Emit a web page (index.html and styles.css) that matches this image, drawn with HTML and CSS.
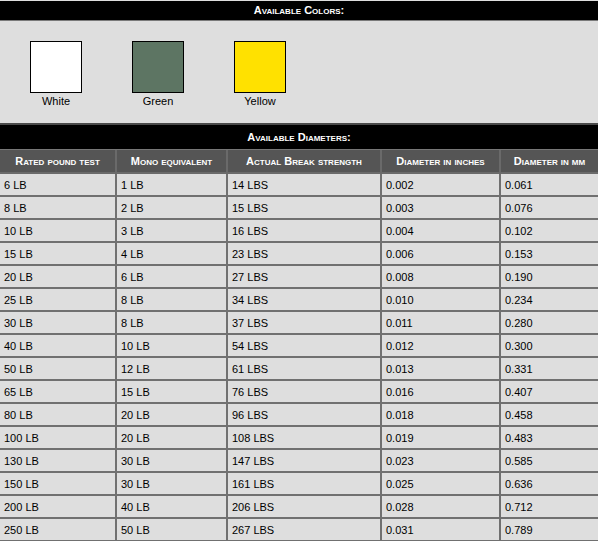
FILE: index.html
```html
<!DOCTYPE html>
<html>
<head>
<meta charset="utf-8">
<link rel="stylesheet" href="styles.css">
</head>
<body>
<div class="page">
  <div class="bar bar-top">Available Colors:</div>
  <div class="colors">
    <div class="swatch"><div class="box white"></div><div class="label">White</div></div>
    <div class="swatch"><div class="box green"></div><div class="label">Green</div></div>
    <div class="swatch"><div class="box yellow"></div><div class="label">Yellow</div></div>
  </div>
  <div class="bar bar-diam">Available Diameters:</div>
  <table class="diam">
    <colgroup>
      <col class="c1"><col class="c2"><col class="c3"><col class="c4"><col class="c5">
    </colgroup>
    <thead>
      <tr><th>Rated pound test</th><th>Mono equivalent</th><th>Actual Break strength</th><th>Diameter in inches</th><th>Diameter in mm</th></tr>
    </thead>
    <tbody>
      <tr><td>6 LB</td><td>1 LB</td><td>14 LBS</td><td>0.002</td><td>0.061</td></tr>
      <tr><td>8 LB</td><td>2 LB</td><td>15 LBS</td><td>0.003</td><td>0.076</td></tr>
      <tr><td>10 LB</td><td>3 LB</td><td>16 LBS</td><td>0.004</td><td>0.102</td></tr>
      <tr><td>15 LB</td><td>4 LB</td><td>23 LBS</td><td>0.006</td><td>0.153</td></tr>
      <tr><td>20 LB</td><td>6 LB</td><td>27 LBS</td><td>0.008</td><td>0.190</td></tr>
      <tr><td>25 LB</td><td>8 LB</td><td>34 LBS</td><td>0.010</td><td>0.234</td></tr>
      <tr><td>30 LB</td><td>8 LB</td><td>37 LBS</td><td>0.011</td><td>0.280</td></tr>
      <tr><td>40 LB</td><td>10 LB</td><td>54 LBS</td><td>0.012</td><td>0.300</td></tr>
      <tr><td>50 LB</td><td>12 LB</td><td>61 LBS</td><td>0.013</td><td>0.331</td></tr>
      <tr><td>65 LB</td><td>15 LB</td><td>76 LBS</td><td>0.016</td><td>0.407</td></tr>
      <tr><td>80 LB</td><td>20 LB</td><td>96 LBS</td><td>0.018</td><td>0.458</td></tr>
      <tr><td>100 LB</td><td>20 LB</td><td>108 LBS</td><td>0.019</td><td>0.483</td></tr>
      <tr><td>130 LB</td><td>30 LB</td><td>147 LBS</td><td>0.023</td><td>0.585</td></tr>
      <tr><td>150 LB</td><td>30 LB</td><td>161 LBS</td><td>0.025</td><td>0.636</td></tr>
      <tr><td>200 LB</td><td>40 LB</td><td>206 LBS</td><td>0.028</td><td>0.712</td></tr>
      <tr><td>250 LB</td><td>50 LB</td><td>267 LBS</td><td>0.031</td><td>0.789</td></tr>
    </tbody>
  </table>
</div>
</body>
</html>
```
FILE: styles.css
```css
html, body {
  margin: 0;
  padding: 0;
  background: #dedede;
}
.page {
  width: 598px;
  font-family: "Liberation Sans", Arial, sans-serif;
  padding-top: 1px;
}
.bar {
  background: #000;
  color: #fff;
  font-weight: bold;
  font-variant: small-caps;
  font-size: 11px;
  text-align: center;
}
.bar-top {
  height: 19px;
  line-height: 19px;
  border-bottom: 1px solid #7a7a7a;
}
.colors {
  display: flex;
  gap: 50px;
  padding: 20px 0 0 30px;
  height: 82px;
  border-bottom: 2px solid #4a4a4a;
}
.swatch {
  display: flex;
  flex-direction: column;
  align-items: center;
  width: 52px;
}
.box {
  width: 50px;
  height: 50px;
  border: 1px solid #000;
}
.white { background: #fff; }
.green { background: #5d7563; }
.yellow { background: #ffe100; }
.label {
  font-size: 11px;
  color: #000;
  margin-top: 2px;
  line-height: 12px;
}
.bar-diam {
  height: 24px;
  line-height: 25px;
  border-bottom: 1px solid #777;
}
.diam {
  width: 598px;
  border-collapse: separate;
  border-spacing: 0;
  table-layout: fixed;
}
.c1 { width: 117px; }
.c2 { width: 111px; }
.c3 { width: 154px; }
.c4 { width: 119px; }
.c5 { width: 97px; }
.diam th {
  background: #555;
  color: #fff;
  font-weight: bold;
  font-variant: small-caps;
  font-size: 11px;
  height: 22px;
  padding: 0;
  text-align: center;
  border-right: 2px solid #6a6a6a;
  border-bottom: 2px solid #6a6a6a;
}
.diam td {
  height: 21px;
  padding: 0 0 0 4px;
  font-size: 11px;
  color: #000;
  border-right: 2px solid #707070;
  border-bottom: 2px solid #707070;
  white-space: nowrap;
  box-sizing: content-box;
}
.diam th:last-child, .diam td:last-child { border-right: 0; }
```
